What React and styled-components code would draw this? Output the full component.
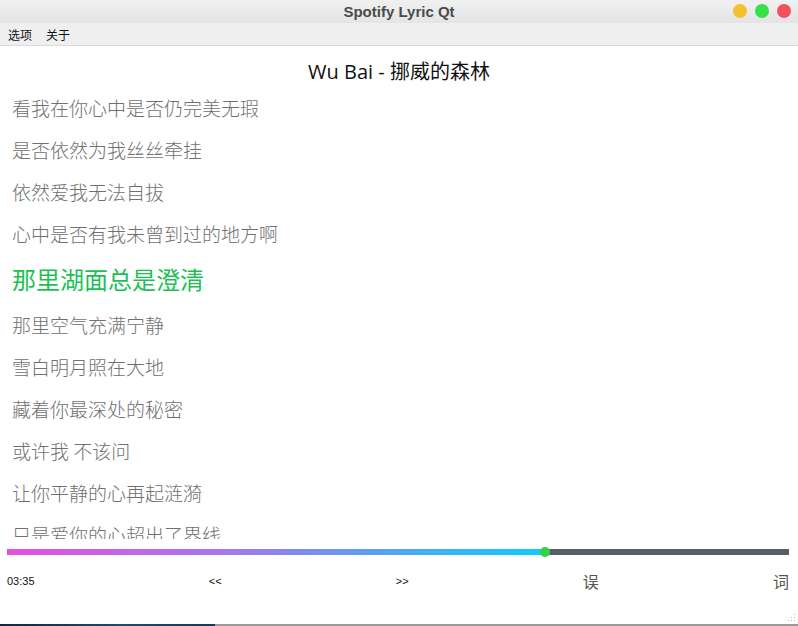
import React from 'react'
import styled, { createGlobalStyle } from 'styled-components'

const Global = createGlobalStyle`
  html, body {
    margin: 0;
    padding: 0;
    background: #ffffff;
  }
  #root {
    width: 798px;
    height: 626px;
  }
`

const Window = styled.div`
  width: 798px;
  height: 626px;
  display: flex;
  flex-direction: column;
  background: #ffffff;
  overflow: hidden;
  font-family: "Noto Sans", "Noto Sans CJK SC", sans-serif;
`

const TitleBar = styled.div`
  height: 23px;
  flex: none;
  position: relative;
  display: flex;
  align-items: center;
  justify-content: center;
  background: linear-gradient(#f1f1f1, #e4e4e4);
  font-family: "Liberation Sans", "DejaVu Sans", sans-serif;
  font-weight: bold;
  font-size: 15px;
  color: #4b4b4b;
`

const Lights = styled.div`
  position: absolute;
  right: 7px;
  top: 4px;
  display: flex;
  gap: 8px;
`

const Light = styled.span`
  width: 14px;
  height: 14px;
  border-radius: 50%;
  background: ${p => p.$color};
`

const MenuBar = styled.div`
  height: 22px;
  flex: none;
  display: flex;
  align-items: center;
  gap: 14px;
  padding-left: 8px;
  background: #efefef;
  border-bottom: 1px solid #dadada;
  font-family: "Noto Sans CJK SC", sans-serif;
  font-size: 12px;
  color: #111;
`

const SongTitle = styled.div`
  flex: none;
  height: 41px;
  box-sizing: border-box;
  padding-top: 8px;
  display: flex;
  align-items: center;
  justify-content: center;
  font-family: "Open Sans", "Noto Sans CJK SC", sans-serif;
  font-size: 20px;
  color: #111;
`

const Lyrics = styled.div`
  flex: none;
  height: 452px;
  overflow: hidden;
  padding-left: 12px;
`

const Line = styled.div`
  height: ${p => (p.$active ? 49 : 42)}px;
  line-height: 42px;
  padding-top: ${p => (p.$active ? 3 : 0)}px;
  box-sizing: border-box;
  font-family: "Noto Sans CJK SC", sans-serif;
  font-weight: ${p => (p.$active ? 400 : 300)};
  font-size: ${p => (p.$active ? 24 : 19)}px;
  color: ${p => (p.$active ? '#1dbf55' : '#707070')};
  white-space: nowrap;
`

const Progress = styled.div`
  flex: none;
  margin: 10px 9px 0 7px;
  height: 6px;
  background: #575f66;
  position: relative;
`

const Filled = styled.div`
  height: 100%;
  background: linear-gradient(90deg, #e44fe0 0%, #a877ea 40%, #4aaaf2 75%, #0ccdfc 100%);
`

const Knob = styled.span`
  position: absolute;
  top: -2px;
  width: 10px;
  height: 10px;
  margin-left: -5px;
  border-radius: 50%;
  background: #35d04a;
`

const Controls = styled.div`
  flex: none;
  display: flex;
  justify-content: space-between;
  align-items: center;
  margin: 15px 9px 0 7px;
  height: 22px;
`

const Small = styled.span`
  font-family: "Liberation Sans", sans-serif;
  font-size: 11px;
  color: #111;
`

const Glyph = styled.span`
  font-family: "Noto Sans CJK SC", sans-serif;
  font-size: 16px;
  color: #555;
`

const Spacer = styled.div`
  flex: 1;
  position: relative;
`

const Grip = styled.svg`
  position: absolute;
  right: 2px;
  bottom: 2px;
`

const Edge = styled.div`
  flex: none;
  height: 2px;
  background: linear-gradient(90deg, #0a2a40 0px, #134f73 120px, #0d3d5c 215px, #9a9a9a 215px);
`

const lines = [
  '看我在你心中是否仍完美无瑕',
  '是否依然为我丝丝牵挂',
  '依然爱我无法自拔',
  '心中是否有我未曾到过的地方啊',
  '那里湖面总是澄清',
  '那里空气充满宁静',
  '雪白明月照在大地',
  '藏着你最深处的秘密',
  '或许我 不该问',
  '让你平静的心再起涟漪',
  '只是爱你的心超出了界线',
]

const progress = (545 - 7) / (789 - 7)

export default function App() {
  return (
    <Window>
      <Global />
      <TitleBar>
        Spotify Lyric Qt
        <Lights>
          <Light $color="#f6c12f" />
          <Light $color="#36e147" />
          <Light $color="#f1515c" />
        </Lights>
      </TitleBar>
      <MenuBar>
        <span>选项</span>
        <span>关于</span>
      </MenuBar>
      <SongTitle>Wu Bai - 挪威的森林</SongTitle>
      <Lyrics>
        {lines.map((l, i) => (
          <Line key={i} $active={i === 4}>{l}</Line>
        ))}
      </Lyrics>
      <Progress>
        <Filled style={{ width: `${progress * 100}%` }} />
        <Knob style={{ left: `${progress * 100}%` }} />
      </Progress>
      <Controls>
        <Small>03:35</Small>
        <Small>&lt;&lt;</Small>
        <Small>&gt;&gt;</Small>
        <Glyph>误</Glyph>
        <Glyph>词</Glyph>
      </Controls>
      <Spacer>
        <Grip width="10" height="10" viewBox="0 0 10 10">
          {[[8, 2], [5, 5], [8, 5], [2, 8], [5, 8], [8, 8]].map(([x, y], i) => (
            <rect key={i} x={x} y={y} width="1" height="1" fill="#bbb" />
          ))}
        </Grip>
      </Spacer>
      <Edge />
    </Window>
  )
}
